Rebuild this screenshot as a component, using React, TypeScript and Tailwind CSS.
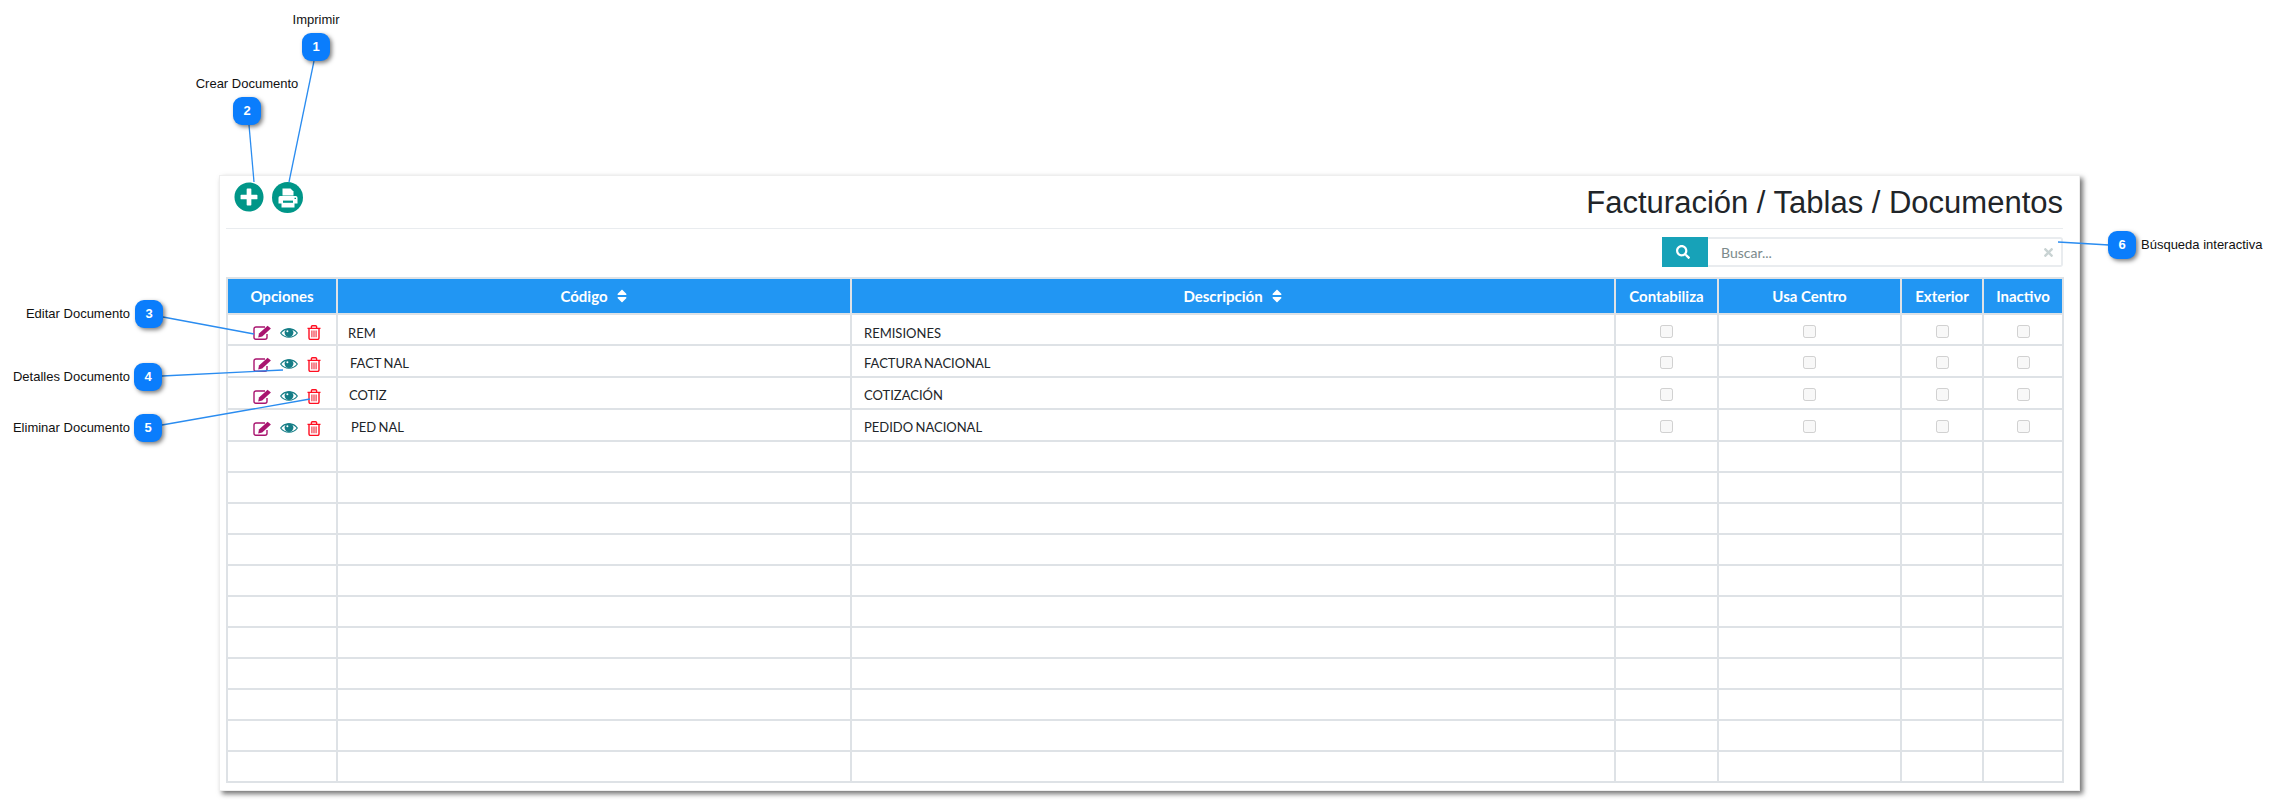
import { FaPlusCircle, FaSearch, FaSort, FaTimes } from "react-icons/fa";

const rows = [
  { code: "REM", codeClass: "pl-[10px] pt-[9px]", descClass: "pt-[9px]", desc: "REMISIONES", height: "h-[31px]" },
  { code: "FACT NAL", codeClass: "pl-[12px] pt-[6px]", descClass: "pt-[6px]", desc: "FACTURA NACIONAL", height: "h-[32px]" },
  { code: "COTIZ", codeClass: "pl-[11px] pt-[6px]", descClass: "pt-[6px]", desc: "COTIZACIÓN", height: "h-[32px]" },
  { code: "PED NAL", codeClass: "pl-[13px] pt-[6px]", descClass: "pt-[6px]", desc: "PEDIDO NACIONAL", height: "h-[32px]" },
];

const emptyRows = Array.from({ length: 11 }, (_, i) => i);

const callouts = [
  { n: 1, badge: "left-[302px] top-[33px]", label: "left-[266px] top-[13px] w-[100px] text-center", text: "Imprimir" },
  { n: 2, badge: "left-[233px] top-[97px]", label: "left-[177px] top-[77px] w-[140px] text-center", text: "Crear Documento" },
  { n: 3, badge: "left-[135px] top-[300px]", label: "left-[0px] top-[307px] w-[130px] text-right", text: "Editar Documento" },
  { n: 4, badge: "left-[134px] top-[363px]", label: "left-[0px] top-[370px] w-[130px] text-right", text: "Detalles Documento" },
  { n: 5, badge: "left-[134px] top-[414px]", label: "left-[0px] top-[421px] w-[130px] text-right", text: "Eliminar Documento" },
  { n: 6, badge: "left-[2108px] top-[231px]", label: "left-[2141px] top-[238px] w-[136px] text-left", text: "Búsqueda interactiva" },
];

const EditIcon = () => (
  <svg viewBox="0 0 19 15" className="w-[19px] h-[15px] shrink-0" fill="none">
    <path d="M12 2H3a2 2 0 0 0-2 2v8.5a1.7 1.7 0 0 0 1.7 1.7h9.3a2 2 0 0 0 2-2V9" stroke="#a9146f" strokeWidth="1.4" />
    <path d="M6 8.5 14.6 0.8l3.3 2.8L9.2 11.6 5.2 12.4Z" fill="#a9146f" />
  </svg>
);

const EyeIcon = () => (
  <svg viewBox="0 0 18 12" className="w-[18px] h-[12px] ml-[8px] shrink-0" fill="none">
    <path d="M0.7 6C4.5 0.4 13.5 0.4 17.3 6 13.5 11.6 4.5 11.6 0.7 6Z" stroke="#147d86" strokeWidth="1.2" />
    <circle cx="9" cy="5.6" r="4.4" fill="#147d86" />
    <circle cx="7.4" cy="4.2" r="1" fill="#ffffff" />
  </svg>
);

const TrashIcon = () => (
  <svg viewBox="0 0 14 15" className="w-[14px] h-[15px] ml-[9px] shrink-0" fill="none">
    <path d="M0.5 3.4H13.5M4.4 3.2V1.6A1 1 0 0 1 5.4 0.7H8.6A1 1 0 0 1 9.6 1.6V3.2" stroke="#ff0f22" strokeWidth="1.4" />
    <path d="M2 3.6V13a1.4 1.4 0 0 0 1.4 1.4H10.6A1.4 1.4 0 0 0 12 13V3.6" stroke="#ff0f22" strokeWidth="1.4" />
    <path d="M4.9 5.6V12.2M7 5.6V12.2M9.1 5.6V12.2" stroke="#f03a48" strokeWidth="1.2" />
  </svg>
);

const PrintIcon = () => (
  <svg viewBox="0 0 20 20" className="w-[20px] h-[20px]">
    <path d="M4.5 0.5H12.5L15.5 3.5V7.6H4.5Z" fill="#ffffff" />
    <path d="M2.2 8H17.8A1.7 1.7 0 0 1 19.5 9.7V15.5H0.5V9.7A1.7 1.7 0 0 1 2.2 8Z" fill="#ffffff" />
    <path d="M3.5 15H16.5V19.5H3.5Z" fill="#ffffff" />
    <path d="M5 12.6H15V14.8H5Z" fill="#009688" />
    <path d="M16.5 9.8H18V11H16.5Z" fill="#009688" />
  </svg>
);

const Check = () => (
  <td className="border-2 border-[#dee2e6] pt-[2px] text-center align-middle">
    <input type="checkbox" disabled className="align-middle" />
  </td>
);

const Empty = () => <td className="border-2 border-[#dee2e6]" />;

const App = () => {
  return (
    <div className="relative w-[2277px] h-[800px] bg-white overflow-hidden pt-[175px] pl-[219px] font-['Lato',sans-serif]">
      <div className="w-[1861px] h-[616px] bg-white pl-[6px] pr-[16px] pt-[6px] border border-[#eeeeee] shadow-[3px_3px_5px_rgba(0,0,0,0.55)]">
        <div className="flex justify-between h-[47px] border-b border-[#e9ecef]">
          <div className="flex gap-[8px] pl-[8px]">
            <FaPlusCircle className="w-[30px] h-[30px] text-[#009688]" />
            <span className="flex items-center justify-center w-[31px] h-[31px] rounded-full bg-[#009688]">
              <PrintIcon />
            </span>
          </div>
          <h1 className="font-['Liberation_Sans',sans-serif] text-[31px] leading-[38px] pt-[2px] text-[#212529]">
            Facturación / Tablas / Documentos
          </h1>
        </div>

        <div className="flex justify-end mt-[8px]">
          <button className="flex items-center justify-center w-[46px] h-[30px] pr-[5px] bg-[#17a2b8] text-white">
            <FaSearch className="w-[14px] h-[14px]" />
          </button>
          <div className="flex items-center justify-between w-[355px] h-[30px] pl-[13px] pr-[6px] border-2 border-[#e9ecef] border-l-0 rounded-r-[3px]">
            <span className="text-[14px] text-[#7b8a8b]">Buscar...</span>
            <FaTimes className="w-[13px] h-[13px] text-[#c9d3d3]" />
          </div>
        </div>

        <table className="table-fixed border-collapse w-[1838px] mt-[10px] text-[13px] text-[#212529]">
          <colgroup>
            <col className="w-[110px]" />
            <col className="w-[514px]" />
            <col className="w-[764px]" />
            <col className="w-[103px]" />
            <col className="w-[183px]" />
            <col className="w-[82px]" />
            <col className="w-[80px]" />
          </colgroup>
          <thead>
            <tr className="h-[36px] bg-[#2196f3] text-white text-[15px] font-bold">
              <th className="border-2 border-[#dee2e6]">Opciones</th>
              <th className="border-2 border-[#dee2e6]">
                <span className="inline-flex items-center gap-[8px]">
                  Código <FaSort className="w-[12px] h-[16px]" />
                </span>
              </th>
              <th className="border-2 border-[#dee2e6]">
                <span className="inline-flex items-center gap-[8px]">
                  Descripción <FaSort className="w-[12px] h-[16px]" />
                </span>
              </th>
              <th className="border-2 border-[#dee2e6]">Contabiliza</th>
              <th className="border-2 border-[#dee2e6]">Usa Centro</th>
              <th className="border-2 border-[#dee2e6]">Exterior</th>
              <th className="border-2 border-[#dee2e6]">Inactivo</th>
            </tr>
          </thead>
          <tbody>
            {rows.map((r) => (
              <tr key={r.code} className={r.height}>
                <td className="border-2 border-[#dee2e6]">
                  <div className="flex items-center pl-[25px] pt-[6px]">
                    <EditIcon />
                    <EyeIcon />
                    <TrashIcon />
                  </div>
                </td>
                <td className={`border-2 border-[#dee2e6] [word-spacing:-1px] ${r.codeClass}`}>{r.code}</td>
                <td className={`border-2 border-[#dee2e6] pl-[12px] [word-spacing:-1px] ${r.descClass}`}>{r.desc}</td>
                <Check />
                <Check />
                <Check />
                <Check />
              </tr>
            ))}
            {emptyRows.map((i) => (
              <tr key={i} className="h-[31px]">
                <Empty />
                <Empty />
                <Empty />
                <Empty />
                <Empty />
                <Empty />
                <Empty />
              </tr>
            ))}
          </tbody>
        </table>
      </div>

      <svg className="absolute inset-0 pointer-events-none" width="2277" height="800">
        <g stroke="#2a8cf0" strokeWidth="1.3" fill="none">
          <line x1="314" y1="61" x2="289" y2="182" />
          <line x1="249" y1="125" x2="254" y2="182" />
          <line x1="163" y1="317" x2="254" y2="334" />
          <line x1="162" y1="376" x2="283" y2="370" />
          <line x1="162" y1="425" x2="310" y2="399" />
          <line x1="2109" y1="245" x2="2058" y2="242" />
        </g>
      </svg>

      {callouts.map((c) => (
        <div key={c.n}>
          <div className={`absolute ${c.label} font-['Liberation_Sans',sans-serif] text-[13px] leading-[14px] text-[#111111] whitespace-nowrap`}>
            {c.text}
          </div>
          <div className={`absolute ${c.badge} flex items-center justify-center w-[28px] h-[28px] rounded-[9px] bg-[#0a7dfc] shadow-[2px_2px_4px_rgba(0,0,0,0.5)] font-['Liberation_Sans',sans-serif] text-[13px] font-bold text-white`}>
            {c.n}
          </div>
        </div>
      ))}
    </div>
  );
};

export default App;
